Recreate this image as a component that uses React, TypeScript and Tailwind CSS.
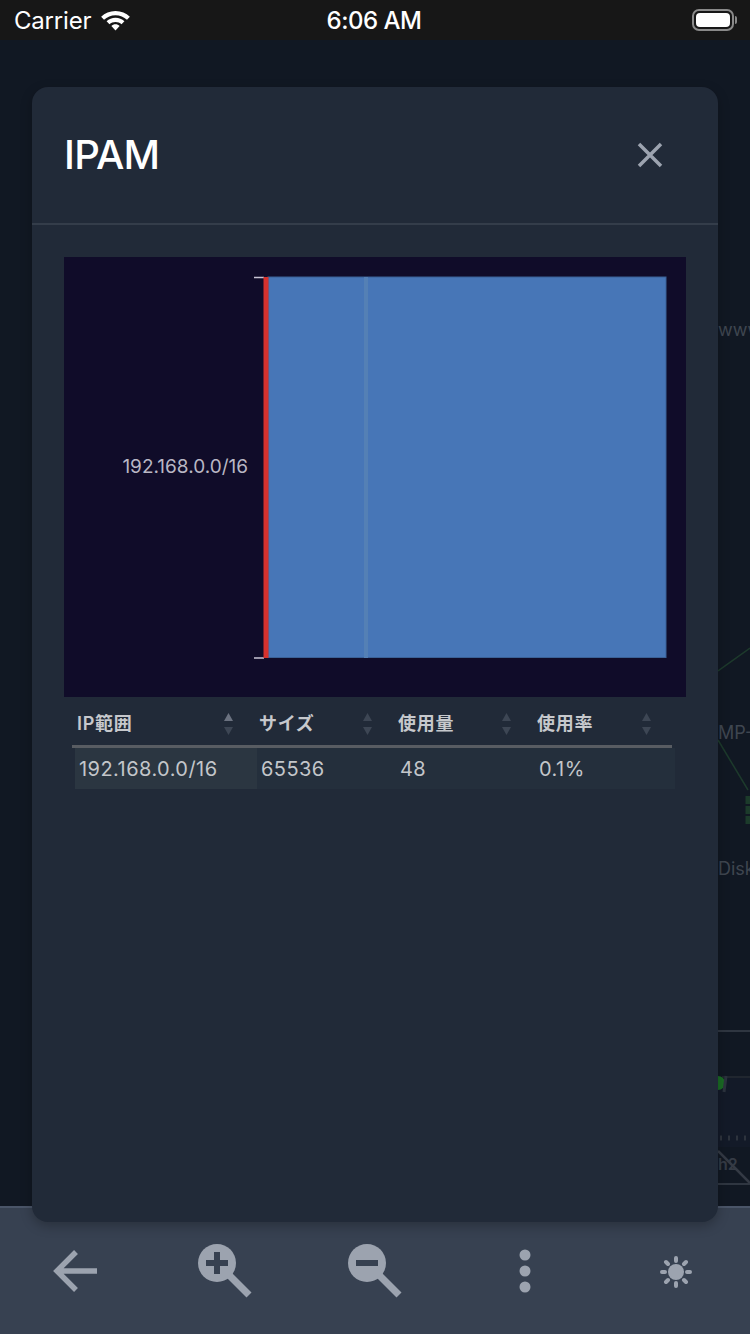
function SortArrows({ active }: { active?: boolean }) {
  return (
    <span className="flex flex-col items-center gap-[6px]">
      <svg width="9" height="8" viewBox="0 0 9 8" className={active ? "fill-[#6b7280]" : "fill-[#3d4654]"}>
        <path d="M4.500 0 L9 8 L0 8 Z" />
      </svg>
      <svg width="9" height="8" viewBox="0 0 9 8" className="fill-[#3d4654]">
        <path d="M0 0 L9 0 L4.500 8 Z" />
      </svg>
    </span>
  );
}

function HeaderCell({ label, active, pad }: { label: string; active?: boolean; pad: string }) {
  return (
    <div className={`flex items-center justify-between ${pad}`}>
      <span className="text-[18px] font-semibold leading-none tracking-[0.7px] text-[#c6c8cc]">{label}</span>
      <SortArrows active={active} />
    </div>
  );
}

function Magnifier({ minus }: { minus?: boolean }) {
  return (
    <svg width="54" height="54" viewBox="0 0 54 54" className="text-[#9ca3af]">
      <circle cx="19" cy="19" r="19" fill="currentColor" />
      <path d="M31 31 L51 51" stroke="currentColor" strokeWidth="7" />
      {minus ? (
        <path d="M8 19 H30" stroke="#374151" strokeWidth="6" />
      ) : (
        <path d="M19 8 V30 M8 19 H30" stroke="#374151" strokeWidth="6" />
      )}
    </svg>
  );
}

export default function App() {
  return (
    <div className="relative flex h-[1334px] w-[750px] flex-col overflow-hidden bg-[#111823] font-['Inter','Noto_Sans_CJK_JP',sans-serif]">
      <div className="flex h-[40px] shrink-0 items-center bg-[#171717] pl-[14px] pr-[13px] pt-[2px] text-white">
        <div className="flex flex-1 items-center gap-[9px]">
          <span className="text-[24px] leading-none tracking-[-0.2px]">Carrier</span>
          <svg width="31" height="23" viewBox="0 0 32 24" fill="white" className="-mt-[3px]">
            <path d="M16 3C10 3 5 5.200 1 9l3 3.200C7.200 9.300 11.400 7.500 16 7.500s8.800 1.800 12 4.700L31 9c-4-3.800-9-6-15-6z" />
            <path d="M16 10.200c-3.600 0-6.900 1.400-9.300 3.700l3 3.100c1.700-1.600 3.900-2.500 6.300-2.500s4.600.9 6.300 2.500l3-3.100c-2.400-2.300-5.700-3.700-9.300-3.700z" />
            <path d="M16 17c-1.700 0-3.200.7-4.300 1.700L16 23.500l4.300-4.800C19.200 17.700 17.700 17 16 17z" />
          </svg>
        </div>
        <span className="mr-[3px] text-[24px] font-medium leading-none tracking-[-0.5px]">6:06 AM</span>
        <div className="flex flex-1 items-center justify-end">
          <div className="-mt-[2px] flex h-[22px] w-[42px] items-center justify-center rounded-[7px] border-2 border-[#8a8a8a]">
            <div className="h-[14px] w-[34px] rounded-[4px] bg-white" />
          </div>
          <div className="ml-[1px] -mt-[2px] h-[8px] w-[2px] rounded-r-sm bg-[#8a8a8a]" />
        </div>
      </div>

      <div className="flex-1" />

      <div className="grid h-[128px] shrink-0 grid-cols-5 place-items-center border-t-2 border-[#4a5568] bg-[#374151]">
        <svg width="44" height="44" viewBox="0 0 44 44" fill="none" stroke="#9ca3af" strokeWidth="5.500">
          <path d="M23 3 L4 22 L23 41 M4 22 H44" />
        </svg>
        <Magnifier />
        <Magnifier minus />
        <svg width="12" height="44" viewBox="0 0 12 44" fill="#9ca3af" className="-ml-[1px]">
          <circle cx="6" cy="6" r="5.500" />
          <circle cx="6" cy="22" r="5.500" />
          <circle cx="6" cy="38" r="5.500" />
        </svg>
        <svg width="34" height="34" viewBox="0 0 34 34" fill="#9ca3af" stroke="#9ca3af" className="mt-[2px] ml-[1px]">
          <circle cx="17" cy="17" r="8" stroke="none" />
          <path
            d="M17 3v3M17 28v3M3 17h3M28 17h3M7 7l2 2M25 25l2 2M7 27l2-2M25 9l2-2"
            strokeWidth="4"
            strokeLinecap="round"
          />
        </svg>
      </div>

      <div className="absolute left-[718px] top-[321px] whitespace-nowrap text-[18px] leading-none text-[#3f4650]">www</div>
      <div className="absolute left-[718px] top-[724px] whitespace-nowrap text-[18px] leading-none text-[#3f4650]">MP-I</div>
      <div className="absolute left-[718px] top-[860px] whitespace-nowrap text-[18px] leading-none text-[#3f4650]">Disk</div>
      <svg width="32" height="560" viewBox="0 0 32 560" fill="none" className="absolute left-[718px] top-[640px]">
        <path d="M0 31 L32 8" stroke="#1d3a2c" strokeWidth="1.500" />
        <path d="M0 100 L30 150" stroke="#1d3a2c" strokeWidth="1.500" />
        <path d="M30 156 v30" stroke="#1c3b2b" strokeWidth="5" strokeDasharray="8 2" />
        <path d="M0 391 H32 M0 544 H32" stroke="#2f3641" strokeWidth="2" />
        <rect x="0" y="437" width="32" height="70" fill="#131a28" />
        <path d="M4 437 H32" stroke="#20262f" strokeWidth="2" />
        <circle cx="0" cy="443" r="7" fill="#1a6b24" />
        <path d="M8 436 L6 452" stroke="#2c333e" strokeWidth="3" />
        <path d="M2 498 H32" stroke="#2d333d" strokeWidth="5" strokeDasharray="2 6" />
        <path d="M0 511 L32 543" stroke="#343a45" strokeWidth="2.500" />
      </svg>
      <div className="absolute left-[718px] top-[1156px] whitespace-nowrap text-[16px] font-semibold leading-none text-[#353b45]">h2</div>

      <div className="absolute left-[32px] top-[87px] flex h-[1135px] w-[686px] flex-col rounded-[16px] bg-[#212a38] shadow-[0_4px_12px_rgba(0,0,0,0.25)]">
        <div className="flex h-[138px] shrink-0 items-center justify-between border-b-2 border-[#343d4a] pl-[32px] pr-[55px]">
          <h1 className="text-[40px] font-medium leading-none tracking-[-0.75px] text-white">IPAM</h1>
          <svg width="26" height="26" viewBox="0 0 26 26" stroke="#9ca3af" strokeWidth="3.500" fill="none">
            <path d="M2 2 L24 24 M24 2 L2 24" />
          </svg>
        </div>

        <div className="flex flex-1 flex-col px-[32px] pt-[32px]">
          <svg width="622" height="440" viewBox="0 0 622 440" className="shrink-0 bg-[#100c29]">
            <path d="M190 20.500H200M190 401H200" stroke="#c8c4d4" strokeWidth="1.500" />
            <rect x="204" y="20" width="398" height="380.500" fill="#4776b7" stroke="#3a6196" />
            <rect x="300" y="20" width="4" height="381" fill="#5480b5" />
            <rect x="199.500" y="20" width="5" height="381" fill="#d6322e" />
            <text x="184" y="216" textAnchor="end" fontSize="19" fill="#b9b7c4" fontFamily="Inter, sans-serif">
              192.168.0.0/16
            </text>
          </svg>

          <div className="ml-[8px] mt-[3px] w-[603px]">
            <div className="grid h-[48px] w-[600px] grid-cols-[182px_139px_139px_140px] items-center border-b-[3px] border-[#585c62] pt-[2px]">
              <HeaderCell label="IP範囲" active pad="pl-[5px] pr-[21px]" />
              <HeaderCell label="サイズ" pad="pl-[5px] pr-[21px]" />
              <HeaderCell label="使用量" pad="pl-[5px] pr-[21px]" />
              <HeaderCell label="使用率" pad="pl-[5px] pr-[21px]" />
            </div>
            <div className="ml-[3px] grid h-[41px] w-[600px] grid-cols-[182px_139px_139px_140px] items-center bg-[#242f3c] text-[20px] tracking-[0.45px] text-[#c3c6ca]">
              <div className="flex h-full items-center bg-[#2b3641] pl-[4px]">192.168.0.0/16</div>
              <div className="pl-[4px]">65536</div>
              <div className="pl-[4px]">48</div>
              <div className="pl-[4px]">0.1%</div>
            </div>
          </div>
        </div>
      </div>
    </div>
  );
}
